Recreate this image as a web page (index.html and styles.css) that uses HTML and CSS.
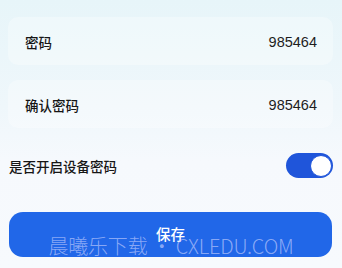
FILE: index.html
```html
<!DOCTYPE html>
<html lang="zh">
<head>
<meta charset="utf-8">
<link rel="stylesheet" href="styles.css">
</head>
<body>
<div class="page">
  <div class="card">
    <span class="label">密码</span>
    <span class="value">985464</span>
  </div>
  <div class="card">
    <span class="label">确认密码</span>
    <span class="value">985464</span>
  </div>
  <div class="row">
    <span class="label">是否开启设备密码</span>
    <span class="toggle"><span class="knob"></span></span>
  </div>
  <button class="save">保存</button>
</div>
<div class="watermark">晨曦乐下载 • CXLEDU.COM</div>
</body>
</html>
```
FILE: styles.css
```css
html, body {
  margin: 0;
  padding: 0;
}
body {
  width: 342px;
  height: 268px;
  overflow: hidden;
  position: relative;
  background: linear-gradient(180deg, #e7f5f9 0%, #eff7fb 40%, #f6f9fd 60%, #f7fafd 100%);
  font-family: "Noto Sans CJK SC", "Noto Sans", sans-serif;
}
.page {
  display: flex;
  flex-direction: column;
  padding: 17px 9px 0 8px;
}
.card {
  height: 48px;
  box-sizing: border-box;
  padding: 2px 16px 0 17px;
  display: flex;
  align-items: center;
  justify-content: space-between;
  background: rgba(255, 255, 255, 0.3);
  border-radius: 10px;
}
.card + .card {
  margin-top: 15px;
}
.label {
  font-size: 13.5px;
  font-weight: 500;
  color: #161616;
}
.value {
  font-family: "Liberation Sans", "Noto Sans", sans-serif;
  font-size: 14.5px;
  color: #1e1e1e;
}
.row {
  margin-top: 25px;
  height: 25px;
  display: flex;
  align-items: center;
  justify-content: space-between;
  padding-left: 1px;
}
.toggle {
  width: 47px;
  height: 25px;
  border-radius: 13px;
  background: #1f55da;
  display: flex;
  align-items: center;
  justify-content: flex-end;
  padding: 0 1px;
  box-sizing: border-box;
}
.knob {
  width: 22px;
  height: 22px;
  border-radius: 50%;
  background: #fff;
  border: 1px solid #1f55da;
  box-sizing: border-box;
}
.save {
  margin: 34px 1px 0 1px;
  height: 45px;
  border: none;
  border-radius: 14px;
  background: #2167e8;
  color: #fff;
  font-family: "Noto Sans CJK SC", sans-serif;
  font-size: 14.5px;
  font-weight: 500;
  padding: 0 0 3px 0;
}
.watermark {
  position: absolute;
  left: 0;
  right: 0;
  top: 231px;
  text-align: center;
  font-family: "Noto Sans CJK SC", sans-serif;
  font-weight: 300;
  font-size: 20px;
  letter-spacing: -0.2px;
  color: rgba(205, 212, 255, 0.62);
  white-space: nowrap;
  pointer-events: none;
}
```
